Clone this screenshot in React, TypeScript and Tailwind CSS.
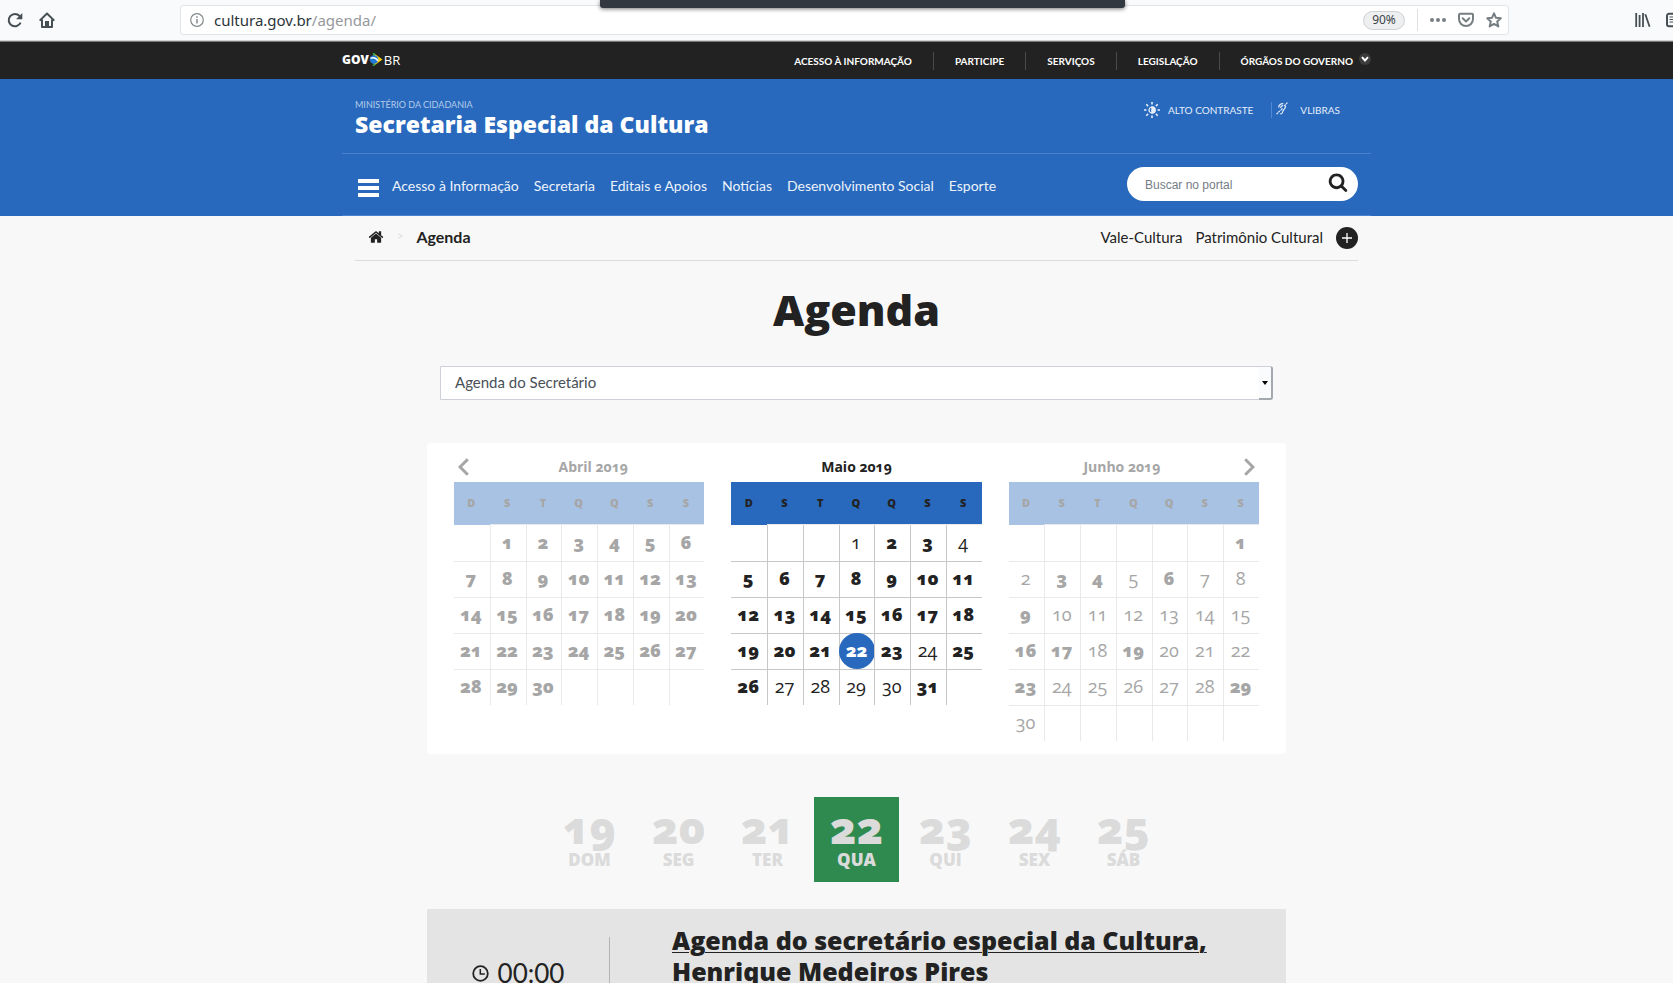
import { useState } from "react";

type Month = {
  name: string;
  offset: number;
  days: number;
  plain: number[];
  active: boolean;
};

const weekLetters = ["D", "S", "T", "Q", "Q", "S", "S"];

const months: Month[] = [
  { name: "Abril 2019", offset: 1, days: 30, plain: [], active: false },
  { name: "Maio 2019", offset: 3, days: 31, plain: [1, 4, 24, 27, 28, 29, 30], active: true },
  {
    name: "Junho 2019",
    offset: 6,
    days: 30,
    plain: [2, 5, 7, 8, 10, 11, 12, 13, 14, 15, 18, 20, 21, 22, 24, 25, 26, 27, 28, 30],
    active: false,
  },
];

const week = [
  { day: 19, label: "DOM" },
  { day: 20, label: "SEG" },
  { day: 21, label: "TER" },
  { day: 22, label: "QUA" },
  { day: 23, label: "QUI" },
  { day: 24, label: "SEX" },
  { day: 25, label: "SÁB" },
];

const govLinks = ["ACESSO À INFORMAÇÃO", "PARTICIPE", "SERVIÇOS", "LEGISLAÇÃO"];

const menuLinks = [
  "Acesso à Informação",
  "Secretaria",
  "Editais e Apoios",
  "Notícias",
  "Desenvolvimento Social",
  "Esporte",
];

function HomeIcon() {
  return (
    <svg width="16" height="16" viewBox="0 0 1792 1792" fill="currentColor" aria-hidden="true">
      <path d="M1472 992v480q0 26-19 45t-45 19h-384v-384h-256v384h-384q-26 0-45-19t-19-45v-480q0-1 .5-3t.5-3l575-474 575 474q1 2 1 6zm223-69l-62 74q-8 9-21 11h-3q-13 0-21-7l-692-577-692 577q-12 8-24 7-13-2-21-11l-62-74q-8-10-7-23.5t11-21.5l719-599q32-26 76-26t76 26l244 204v-195q0-14 9-23t23-9h192q14 0 23 9t9 23v408l219 182q10 8 11 21.500t-7 23.500z" />
    </svg>
  );
}

function SearchIcon() {
  return (
    <svg width="20" height="20" viewBox="0 0 1792 1792" fill="currentColor" aria-hidden="true">
      <path d="M1216 832q0-185-131.500-316.500t-316.500-131.500-316.500 131.500-131.500 316.500 131.500 316.500 316.500 131.500 316.500-131.500 131.500-316.500zm512 832q0 52-38 90t-90 38q-54 0-90-38l-343-342q-179 124-399 124-143 0-273.500-55.500t-225-150-150-225-55.500-273.500 55.500-273.500 150-225 225-150 273.500-55.500 273.500 55.500 225 150 150 225 55.500 273.500q0 220-124 399l343 343q37 37 37 90z" />
    </svg>
  );
}

function BrowserBar() {
  return (
    <div className="relative flex h-[42px] items-center border-b border-[#77797b] bg-[#f9fafc] pb-px pl-[7px] font-['Noto_Sans',sans-serif] shadow-[inset_0_-1px_0_#cfd1d3]">
      <button aria-label="Recarregar" className="mr-4 text-[#454f54]">
        <svg width="16" height="16" viewBox="0 0 16 16" fill="none" stroke="currentColor" strokeWidth="2">
          <path d="M13.600 10.600A6.200 6.200 0 1 1 12.600 4" />
          <path d="M15.300 1v6.200H9.100z" fill="currentColor" stroke="none" />
        </svg>
      </button>
      <button aria-label="Página inicial" className="text-[#454f54]">
        <svg width="16" height="16" viewBox="0 0 16 16" fill="none" stroke="currentColor" strokeWidth="2">
          <path d="M.7 8.600 8 1.500l7.300 7.100M3 7.500V15h10V7.500" strokeLinejoin="round" />
          <path d="M6 15V9h4v6z" fill="currentColor" stroke="none" />
        </svg>
      </button>
      <div className="mr-[164px] ml-[125px] flex h-[30px] flex-1 items-center rounded-[3px] border border-[#e2e4e6] bg-white pr-1.5 pl-[9px]">
        <svg width="14" height="14" viewBox="0 0 14 14" fill="none" stroke="#84898c" strokeWidth="1.200" aria-hidden="true">
          <circle cx="7" cy="7" r="6.300" />
          <path d="M7 6v4.500M7 3.300v1.500" strokeWidth="1.500" />
        </svg>
        <div className="ml-[10px] flex-1 text-[15px] leading-6 text-[#2c3539]">
          cultura.gov.br<span className="text-[#95999c]">/agenda/</span>
        </div>
        <span className="mr-3 flex h-[19px] w-[42px] items-center justify-center rounded-full border border-[#cfd1d3] bg-[#eeeff0] text-xs text-[#3b4448]">
          90%
        </span>
        <span className="mr-3 h-[22px] w-px bg-[#dfe1e3]" />
        <button aria-label="Mais ações" className="mr-3 text-[#767e82]">
          <svg width="16" height="16" viewBox="0 0 16 16" fill="currentColor">
            <circle cx="2" cy="8" r="2" />
            <circle cx="8" cy="8" r="2" />
            <circle cx="14" cy="8" r="2" />
          </svg>
        </button>
        <button aria-label="Salvar no Pocket" className="mr-3 text-[#767e82]">
          <svg width="16" height="16" viewBox="0 0 16 16" fill="none" stroke="currentColor" strokeWidth="2" strokeLinecap="round" strokeLinejoin="round">
            <path d="M2 1.800h12a1 1 0 0 1 1 1V7A7 7 0 0 1 1 7V2.800a1 1 0 0 1 1-1z" />
            <path d="M4.700 6.300 8 9.400l3.300-3.100" />
          </svg>
        </button>
        <button aria-label="Favoritar" className="text-[#767e82]">
          <svg width="16" height="16" viewBox="0 0 16 16" fill="none" stroke="currentColor" strokeWidth="2" strokeLinejoin="round">
            <path d="M8 1.400l2 4.400 4.800.500-3.600 3.200 1.100 4.900L8 11.900l-4.300 2.500 1.100-4.900L1.200 6.300 6 5.800z" />
          </svg>
        </button>
      </div>
      <div className="absolute top-3 right-0 flex gap-[15px] text-[#454f54]">
        <svg width="16" height="16" viewBox="0 0 16 16" fill="none" stroke="currentColor" strokeWidth="1.800" aria-hidden="true">
          <path d="M1.200 1v14M4.600 3v12M8 1v14M10.300 2.300 14.600 14.800" />
        </svg>
        <svg width="7" height="16" viewBox="0 0 7 16" fill="none" stroke="currentColor" strokeWidth="2" aria-hidden="true">
          <path d="M8 1.800H3a2 2 0 0 0-2 2v8.400a2 2 0 0 0 2 2h5" />
          <path d="M3.500 5H7M3.500 7.500H7M3.500 10H7" strokeWidth="1" />
        </svg>
      </div>
      <div className="absolute top-0 left-[600px] h-2 w-[525px] rounded-b-[3px] bg-[#31383f] shadow-[0_1px_4px_rgba(0,0,0,0.55)]" />
    </div>
  );
}

function GovBar() {
  return (
    <div className="bg-[#222222] pl-10">
      <div className="mx-auto flex h-[37px] max-w-[1029px] items-center justify-between">
        <a href="#gov" className="flex items-center pb-0.5 font-['Open_Sans',sans-serif] text-xs leading-4 text-white">
          <span className="font-extrabold">GOV</span>
          <svg width="14" height="13" viewBox="0 0 14 13" className="mr-px" aria-hidden="true">
            <path d="M4.500 0 13.500 6.500 4.500 13z" fill="#f9cf0b" />
            <path d="M3.500 0H5.500L6.500 1.500 4.500 3zM3.500 13H5.500L6.500 11.500 4.500 10z" fill="#2f9a46" />
            <circle cx="5" cy="6.500" r="4.300" fill="#2379d6" />
            <path d="M1.500 5.300C4.500 4.300 7.500 5.300 9 8" stroke="#fff" strokeWidth="1.500" fill="none" />
          </svg>
          <span className="text-[13px]">BR</span>
        </a>
        <nav className="flex items-center text-[10px] leading-4 font-bold text-white">
          {govLinks.map((link) => (
            <a key={link} href="#gov" className="mr-[21px] flex h-[18px] items-center border-r border-[#4a4a4a] pr-[21px]">
              {link}
            </a>
          ))}
          <button className="flex items-center gap-[6px]">
            ÓRGÃOS DO GOVERNO
            <svg width="12" height="12" viewBox="0 0 12 12" className="mb-1" aria-hidden="true">
              <circle cx="6" cy="6" r="6" fill="#3c3c3c" />
              <path d="M3 4.200 6 7.500l3-3.300" stroke="#fff" strokeWidth="2" fill="none" />
            </svg>
          </button>
        </nav>
      </div>
    </div>
  );
}

function Header() {
  return (
    <header className="bg-[#2869bd] pl-10 text-white">
      <div className="mx-auto max-w-[1029px]">
        <div className="flex h-[75px] justify-between border-b border-[#4a82cf] pr-[31px] pl-[13px]">
          <div className="pt-5">
            <p className="text-[9px] leading-3 text-[#b4cbea]">MINISTÉRIO DA CIDADANIA</p>
            <a href="#inicio" className="block font-['Open_Sans',sans-serif] text-[23px] leading-[26px] font-extrabold">
              Secretaria Especial da Cultura
            </a>
          </div>
          <div className="flex items-center self-start pt-[23px] text-[10px] leading-4 text-[#e6eefa]">
            <a href="#contraste" className="flex items-center gap-2">
              <svg width="16" height="16" viewBox="0 0 16 16" fill="none" stroke="currentColor" strokeWidth="1.600" aria-hidden="true">
                <circle cx="8" cy="8" r="3" strokeWidth="1.200" />
                <path d="M8 5a3 3 0 0 1 0 6z" fill="currentColor" />
                <path d="M8 0v2.500M8 13.500V16M0 8h2.500M13.500 8H16M2.300 2.300l1.800 1.800M11.900 11.900l1.800 1.800M2.300 13.700l1.800-1.800M11.900 4.100l1.800-1.800" />
              </svg>
              ALTO CONTRASTE
            </a>
            <a href="#vlibras" className="ml-[18px] flex h-4 items-center gap-3 border-l border-[#5289d4] pl-1">
              <svg width="12" height="13" viewBox="0 0 12 13" fill="none" stroke="currentColor" strokeWidth="1.200" className="mb-1" aria-hidden="true">
                <path d="M.6 12.200 4.600 8M11.400.6 8.300 4" strokeDasharray="2 .6" />
                <path d="M2.600 5.600C2.800 3 5 1.300 7.300 1.600M4.600 6c.1-1.500 1.200-2.500 2.600-2.300M9.600 4c.2 2.600-2.400 3.200-2.800 5.500-.3 1.600-1.300 2.600-2.600 2.200M6.200 6.200 5.400 8.300" />
              </svg>
              VLIBRAS
            </a>
          </div>
        </div>
        <div className="flex h-[62px] items-center border-b border-[#4a82cf] pr-[13px] pb-0.5 pl-4">
          <button aria-label="Menu" className="mt-2 mr-[13px] flex flex-col gap-[3px]">
            <span className="h-1 w-[21px] bg-white" />
            <span className="h-1 w-[21px] bg-white" />
            <span className="h-1 w-[21px] bg-white" />
          </button>
          <nav className="flex flex-1 gap-[15px] pt-1 text-sm leading-5 text-[#edf3fb]">
            {menuLinks.map((link) => (
              <a key={link} href="#menu">
                {link}
              </a>
            ))}
          </nav>
          <form className="flex h-[34px] w-[231px] items-center rounded-full bg-white pr-[10px] pl-[18px]">
            <input
              aria-label="Buscar no portal"
              placeholder="Buscar no portal"
              className="h-full w-full min-w-0 flex-1 bg-transparent pt-0.5 font-['Liberation_Sans',sans-serif] text-xs text-[#222] outline-none placeholder:text-[#757d85]"
            />
            <button type="button" aria-label="Buscar" className="pb-1 text-[#222]">
              <SearchIcon />
            </button>
          </form>
        </div>
      </div>
    </header>
  );
}

function Breadcrumbs() {
  return (
    <div className="mx-auto flex h-[45px] max-w-[1003px] items-center border-b border-[#dcdcdc] pl-[13px] text-[15px] leading-5">
      <a href="#inicio" aria-label="Início" className="pb-0.5">
        <HomeIcon />
      </a>
      <span className="mx-[13px] pb-1 text-[11px] text-[#dddddd]">&gt;</span>
      <span className="flex-1 pb-0.5 text-base leading-5 font-bold">Agenda</span>
      <nav className="flex items-center gap-[13px]">
        <a href="#vale" className="pb-0.5">
          Vale-Cultura
        </a>
        <a href="#patrimonio" className="pb-0.5">
          Patrimônio Cultural
        </a>
        <button aria-label="Mais" className="flex size-[22px] items-center justify-center rounded-full bg-[#222] text-white">
          <svg width="10" height="10" viewBox="0 0 10 10" stroke="currentColor" strokeWidth="1.300" aria-hidden="true">
            <path d="M5 0v10M0 5h10" />
          </svg>
        </button>
      </nav>
    </div>
  );
}

function Chevron({ flip }: { flip?: boolean }) {
  return (
    <button
      aria-label={flip ? "Próximo mês" : "Mês anterior"}
      className={flip ? "absolute top-[7px] right-1 text-[#a6a6a6]" : "absolute top-[7px] left-1 text-[#a6a6a6]"}
    >
      <svg width="11" height="18" viewBox="0 0 11 18" fill="none" stroke="currentColor" strokeWidth="3">
        <path d={flip ? "M1.200 1.200 9 9l-7.800 7.800" : "M9.800 1.200 2 9l7.800 7.800"} />
      </svg>
    </button>
  );
}

const titlePadding = ["pl-7", "", "pr-6"];

function Calendar({ month, index, selected, onSelect }: { month: Month; index: number; selected: number; onSelect: (d: number) => void }) {
  const rows = Math.ceil((month.offset + month.days) / 7);
  const tone = month.active ? "text-[#222]" : "text-[#a6a6a6]";
  const head = month.active ? "bg-[#2869bd]" : "bg-[#a8c2e4]";
  const line = month.active ? "border-[#c8c8c8]" : "border-[#e9e9e9]";
  const headLine = month.active ? "border-[#2869bd]" : "border-[#a8c2e4]";
  return (
    <section className={"relative flex-1 font-['Open_Sans',sans-serif] " + tone}>
      {index === 0 && <Chevron />}
      {index === 2 && <Chevron flip />}
      <h2 className={"h-[31px] text-center text-sm leading-[31px] font-bold oldstyle-nums " + titlePadding[index]}>{month.name}</h2>
      <table className="w-full table-fixed border-separate border-spacing-0 text-center">
        <thead className={head}>
          <tr>
            {weekLetters.map((letter, i) => (
              <th key={i} className="h-[42px] p-0 pr-px text-[11px] font-extrabold">
                {letter}
              </th>
            ))}
          </tr>
        </thead>
        <tbody className="text-lg leading-5 oldstyle-nums">
          {Array.from({ length: rows }, (_, r) => (
            <tr key={r}>
              {weekLetters.map((_, c) => {
                const day = r * 7 + c - month.offset + 1;
                const valid = day > 0 && day <= month.days;
                const isSelected = month.active && day === selected;
                const weight = month.plain.includes(day) ? "font-normal" : "font-extrabold";
                const topLine = r > 0 ? line : c === 0 ? headLine : "border-[#e9e9e9]";
                return (
                  <td
                    key={c}
                    className={"relative border-t p-0 pr-0.5 pb-[3px] " + (r === 0 ? "h-[37px] " : "h-9 ") + (c > 0 ? "border-l " : "") + topLine + " " + weight}
                  >
                    {c > 0 && r === 0 && <span className={"absolute inset-y-0 -left-px border-l " + line} />}
                    {valid && isSelected && (
                      <button className="absolute -top-px -left-px flex size-9 items-center justify-center rounded-full bg-[#2869bd] pb-0.5 text-white">
                        {day}
                      </button>
                    )}
                    {valid && !isSelected && <button onClick={() => onSelect(day)}>{day}</button>}
                  </td>
                );
              })}
            </tr>
          ))}
        </tbody>
      </table>
    </section>
  );
}

export default function App() {
  const [selected, setSelected] = useState(22);
  return (
    <div className="h-screen overflow-hidden bg-[#f8f8f8] font-[Lato,sans-serif] text-[#222222]">
      <BrowserBar />
      <GovBar />
      <Header />
      <main className="pl-10">
        <Breadcrumbs />
        <div className="mx-auto max-w-[859px]">
          <h1 id="titulo" className="pt-6 text-center font-['Open_Sans',sans-serif] text-[43px] leading-[50px] font-extrabold">
            Agenda
          </h1>
          <div className="relative mx-[13px] mt-[31px]">
            <select
              aria-labelledby="titulo"
              className="block h-[34px] w-full appearance-none rounded-r-[3px] border border-[#cdd0d6] bg-white pb-px pl-[14px] text-[15px] text-[#495057]"
            >
              <option>Agenda do Secretário</option>
            </select>
            <span className="pointer-events-none absolute inset-y-0 right-0 flex w-[14px] items-center justify-center rounded-r-[3px] border-t border-r-2 border-b-2 border-t-[#cdd0d6] border-r-[#a4a9b0] border-b-[#a4a9b0] bg-[#fafbfc]">
              <span className="border-x-3 border-t-4 border-x-transparent border-t-black" />
            </span>
          </div>
          <div className="mt-[43px] flex gap-[27px] rounded bg-white px-[27px] pt-2 pb-[13px]">
            {months.map((month, i) => (
              <Calendar key={month.name} month={month} index={i} selected={selected} onSelect={setSelected} />
            ))}
          </div>
          <div className="mt-[43px] flex justify-center gap-1 font-['Open_Sans',sans-serif] font-extrabold text-[#dbdbdb]">
            {week.map(({ day, label }) => (
              <button
                key={day}
                onClick={() => setSelected(day)}
                className={"flex size-[85px] flex-col items-center pt-2 " + (day === selected ? "bg-[#2f8a4f]" : "")}
              >
                <span className="text-[44px] leading-[44px] oldstyle-nums">{day}</span>
                <span className="text-[17px] leading-[22px]">{label}</span>
              </button>
            ))}
          </div>
          <article className="mt-[27px] flex bg-[#e4e4e4] pb-10">
            <div className="mt-7 flex w-[183px] items-center justify-center gap-[9px] border-r border-[#b4b4b4] pt-5 text-[26px] leading-8">
              <svg width="17" height="17" viewBox="0 0 17 17" fill="none" stroke="currentColor" strokeWidth="1.800" aria-hidden="true">
                <circle cx="8.500" cy="8.500" r="7.300" />
                <path d="M8.300 4v5h4.500" strokeWidth="1.500" />
              </svg>
              <time>00:00</time>
            </div>
            <h3 className="ml-[62px] w-[560px] pt-4 font-['Open_Sans',sans-serif] text-[25px] leading-[31px] font-extrabold">
              <a href="#evento" className="underline decoration-1 underline-offset-2">
                Agenda do secretário especial da Cultura, Henrique Medeiros Pires
              </a>
            </h3>
          </article>
        </div>
      </main>
    </div>
  );
}
